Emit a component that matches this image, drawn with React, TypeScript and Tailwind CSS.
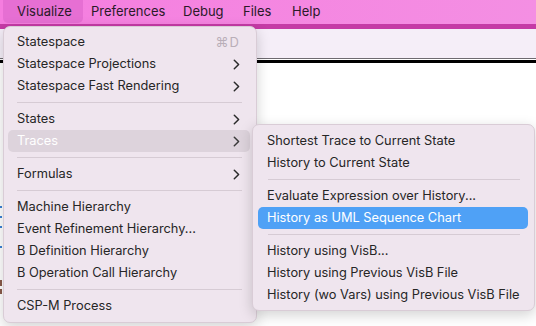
import React from "react";

const font = { fontFamily: "Inter, 'Noto Sans', 'Liberation Sans', sans-serif" };

function Chevron({ color = "#2a2a2a" }: { color?: string }) {
  return (
    <svg width="7" height="11" viewBox="0 0 7 11" className="shrink-0">
      <path d="M1.3 1.2 L5.6 5.5 L1.3 9.8" fill="none" stroke={color} strokeWidth="1.5" strokeLinecap="round" strokeLinejoin="round" />
    </svg>
  );
}

type Item =
  | { sep: true }
  | { sep?: false; label: string; sub?: boolean; shortcut?: string; hl?: "gray" | "blue" };

const mainItems: Item[] = [
  { label: "Statespace", shortcut: "⌘D" },
  { label: "Statespace Projections", sub: true },
  { label: "Statespace Fast Rendering", sub: true },
  { sep: true },
  { label: "States", sub: true },
  { label: "Traces", sub: true, hl: "gray" },
  { sep: true },
  { label: "Formulas", sub: true },
  { sep: true },
  { label: "Machine Hierarchy" },
  { label: "Event Refinement Hierarchy..." },
  { label: "B Definition Hierarchy" },
  { label: "B Operation Call Hierarchy" },
  { sep: true },
  { label: "CSP-M Process" },
];

const subItems: Item[] = [
  { label: "Shortest Trace to Current State" },
  { label: "History to Current State" },
  { sep: true },
  { label: "Evaluate Expression over History..." },
  { label: "History as UML Sequence Chart", hl: "blue" },
  { sep: true },
  { label: "History using VisB..." },
  { label: "History using Previous VisB File" },
  { label: "History (wo Vars) using Previous VisB File" },
];

function Menu({ items, sub }: { items: Item[]; sub?: boolean }) {
  return (
    <div className={sub ? "flex flex-col pt-[5px] pb-[4px]" : "flex flex-col pt-[4px] pb-[5px]"}>
      {items.map((it, i) => {
        if (it.sep) {
          return (
            <div key={i} className={sub ? "h-[11px] flex items-center pl-[15px] pr-[14px]" : "h-[11px] flex items-center pl-[13px] pr-[14px]"}>
              <div className="h-px w-full bg-[#d6cbd4]" />
            </div>
          );
        }
        const hl = it.hl;
        const rowCls =
          hl === "blue"
            ? "bg-[#4fa1f6] text-white"
            : hl === "gray"
            ? "bg-[#ddd3dc] text-white"
            : "text-[#262626]";
        return (
          <div
            key={i}
            className={
              (sub ? "ml-[5px] mr-[6px] pl-[9px] " : "ml-[4px] mr-[6px] pl-[9px] ") +
              "h-[22px] rounded-[5px] flex items-center pr-[10px] text-[12.8px] leading-none " +
              rowCls
            }
          >
            <span className="flex-1 whitespace-nowrap">{it.label}</span>
            {it.shortcut && <span className="text-[#b9aeb8] text-[13px] tracking-[1px]">{it.shortcut}</span>}
            {it.sub && (
              <span className="flex items-center">
                <Chevron color={hl === "gray" ? "#3a3a3a" : "#2a2a2a"} />
              </span>
            )}
          </div>
        );
      })}
    </div>
  );
}

export default function App() {
  const bar = [
    { t: "Visualize", w: 80, pl: 14, active: true },
    { t: "Preferences", w: 89, pl: 8 },
    { t: "Debug", w: 60, pl: 11 },
    { t: "Files", w: 49, pl: 11 },
    { t: "Help", w: 49, pl: 11 },
  ];
  return (
    <div className="relative w-[536px] h-[326px] overflow-hidden bg-white" style={font}>
      {/* menubar */}
      <div className="h-[24px] flex bg-gradient-to-r from-[#f57ddf] to-[#f48fe3] pl-[3px]">
        {bar.map((b) => (
          <div
            key={b.t}
            className={
              "h-[23px] flex items-center text-[13px] text-[#2a1a28] " +
              (b.active ? "bg-[#e66fd3] rounded-b-[5px]" : "")
            }
            style={{ width: b.w, paddingLeft: b.pl }}
          >
            {b.t}
          </div>
        ))}
      </div>
      <div className="h-[5px] bg-[#c53ba6]" />
      <div className="h-[29px] bg-[#f5eef8]" />
      <div className="h-px bg-[#6e6a70]" />
      <div className="h-px bg-white" />
      <div className="h-[3px] bg-black" />
      <div className="h-[263px] bg-white flex flex-col pt-[143px] gap-[8px]">
        <div className="w-[2px] h-[2px] bg-[#3b82d6]" />
        <div className="w-[2px] h-[2px] bg-[#3b82d6]" />
        <div className="w-[2px] h-[2px] bg-[#3b82d6]" />
        <div className="w-[2px] h-[2px] bg-[#3b82d6] mt-[10px]" />
        <div className="w-[2px] h-[6px] bg-[#8a5a4a] mt-[24px]" />
        <div className="w-[2px] h-[5px] bg-[#8a5a4a] -mt-[5px]" />
      </div>

      {/* main dropdown */}
      <div className="absolute left-[3px] top-[26px] w-[254px] rounded-[7px] bg-[#efe5ee] border border-[#d9ccd6] shadow-[0_4px_14px_rgba(0,0,0,0.18)]">
        <Menu items={mainItems} />
      </div>

      {/* submenu */}
      <div className="absolute left-[252px] top-[124px] w-[283px] rounded-[7px] bg-[#efe5ee] border border-[#d9ccd6] shadow-[0_4px_14px_rgba(0,0,0,0.18)]">
        <Menu items={subItems} sub />
      </div>
    </div>
  );
}
